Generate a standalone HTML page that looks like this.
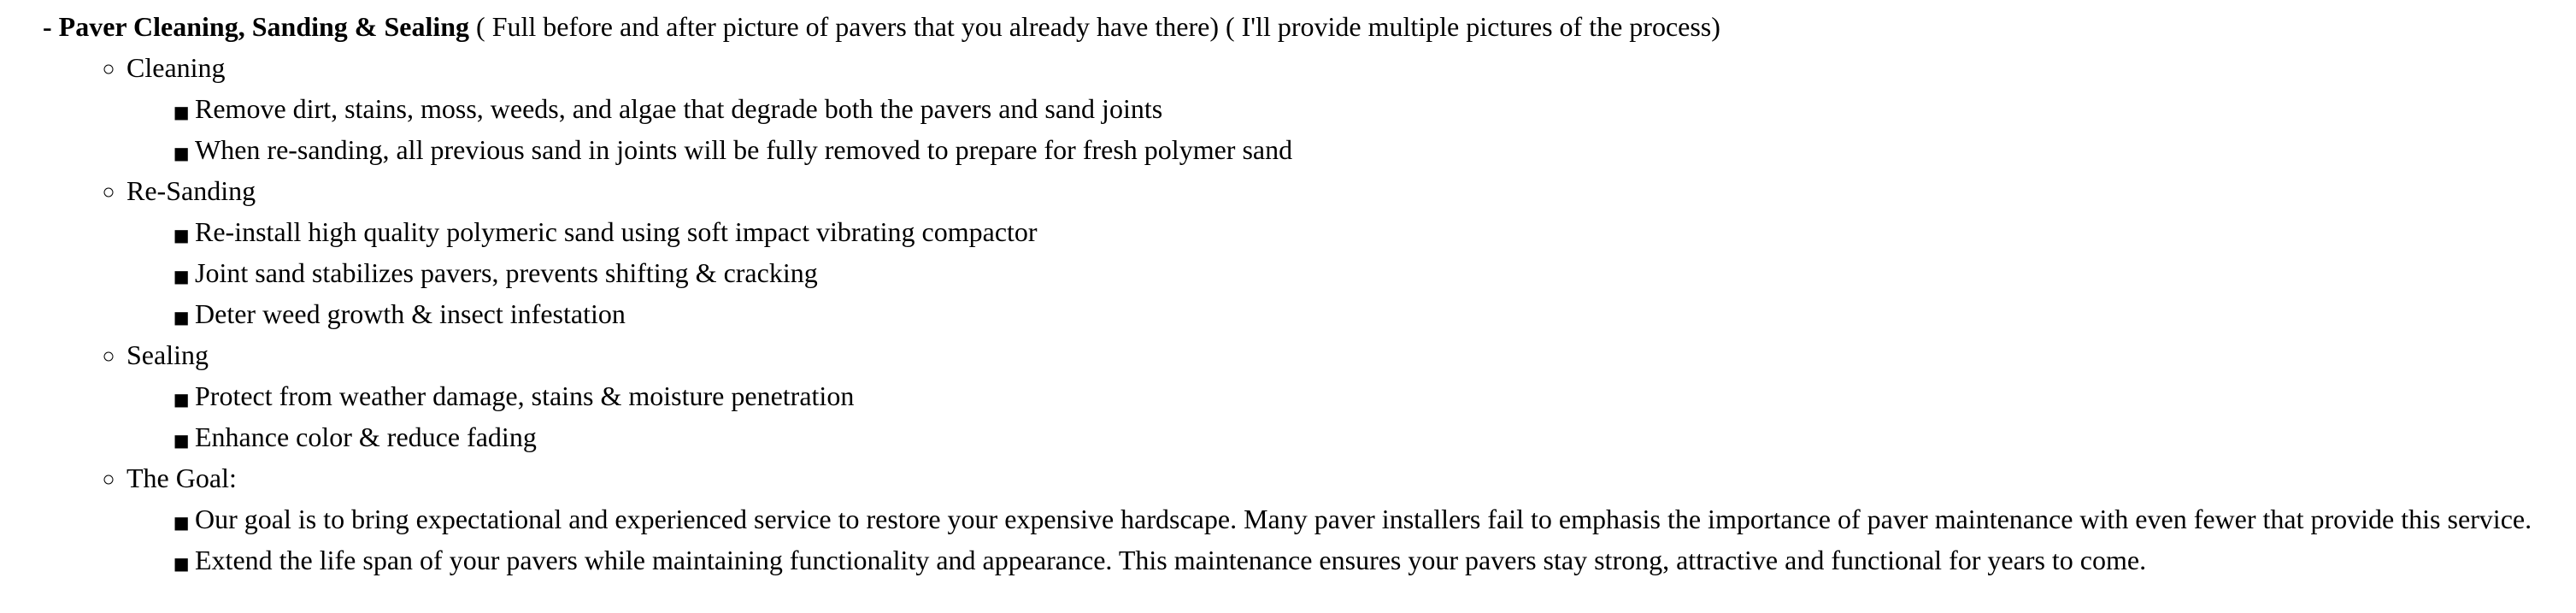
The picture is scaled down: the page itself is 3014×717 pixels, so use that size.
<!DOCTYPE html>
<html><head><meta charset="utf-8"><style>
html,body{margin:0;padding:0;background:#fff;width:3014px;height:710px;overflow:hidden}
body{font-family:"Liberation Serif",serif;font-size:32px;line-height:48px;color:#000;padding-top:7px}
p{margin:0;padding-left:50px;white-space:nowrap}
ul{margin:0;padding:0}
ul.l2{padding-left:148px;list-style:circle}
ul.l3{padding-left:80px;list-style-type:"\25A0  "}
ul.l3 li::marker{font-family:"DejaVu Sans",sans-serif;font-size:20px}
li{white-space:nowrap}
</style></head><body>
<p><b>- Paver Cleaning, Sanding &amp; Sealing</b> ( Full before and after picture of pavers that you already have there) ( I'll provide multiple pictures of the process)</p>
<ul class="l2">
<li>Cleaning
<ul class="l3">
<li>Remove dirt, stains, moss, weeds, and algae that degrade both the pavers and sand joints</li>
<li>When re-sanding, all previous sand in joints will be fully removed to prepare for fresh polymer sand</li>
</ul></li>
<li>Re-Sanding
<ul class="l3">
<li>Re-install high quality polymeric sand using soft impact vibrating compactor</li>
<li>Joint sand stabilizes pavers, prevents shifting &amp; cracking</li>
<li>Deter weed growth &amp; insect infestation</li>
</ul></li>
<li>Sealing
<ul class="l3">
<li>Protect from weather damage, stains &amp; moisture penetration</li>
<li>Enhance color &amp; reduce fading</li>
</ul></li>
<li>The Goal:
<ul class="l3">
<li>Our goal is to bring expectational and experienced service to restore your expensive hardscape. Many paver installers fail to emphasis the importance of paver maintenance with even fewer that provide this service.</li>
<li>Extend the life span of your pavers while maintaining functionality and appearance. This maintenance ensures your pavers stay strong, attractive and functional for years to come.</li>
</ul></li>
</ul>
</body></html>
